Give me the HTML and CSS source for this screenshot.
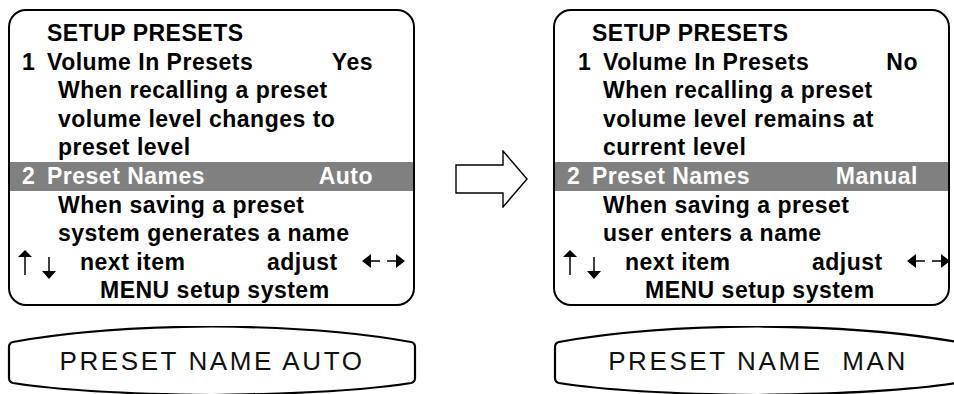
FILE: index.html
```html
<!doctype html>
<html lang="en">
<head>
  <meta charset="utf-8">
  <title>Setup presets</title>
  <link rel="stylesheet" href="styles.css">
</head>
<body>
<div class="page">
  <div class="screens">
    <section class="menu">
      <div class="title">SETUP PRESETS</div>
      <div class="item"><span class="num">1</span><span>Volume In Presets</span><span class="val">Yes</span></div>
      <div class="desc">When recalling a preset</div>
      <div class="desc">volume level changes to</div>
      <div class="desc">preset level</div>
      <div class="item sel"><span class="num">2</span><span>Preset Names</span><span class="val">Auto</span></div>
      <div class="desc">When saving a preset</div>
      <div class="desc">system generates a name</div>
      <div class="foot">
        <svg class="updown" width="70" height="30" viewBox="0 0 70 30">
          <line x1="15" y1="6" x2="15" y2="26" stroke="#000" stroke-width="1.5"/>
          <polygon points="15,1 8,8 22,8" fill="#000"/>
          <line x1="39" y1="8" x2="39" y2="23" stroke="#000" stroke-width="1.5"/>
          <polygon points="39,30 32,22 46,22" fill="#000"/>
        </svg>
        <span>next item</span>
        <span>adjust</span>
        <svg class="leftright" width="44" height="28" viewBox="0 0 44 28">
          <polygon points="0,13 9,6 9,20" fill="#000"/>
          <line x1="8" y1="13" x2="18" y2="13" stroke="#000" stroke-width="1.5"/>
          <line x1="25" y1="13" x2="35" y2="13" stroke="#000" stroke-width="1.5"/>
          <polygon points="43,13 34,6 34,20" fill="#000"/>
        </svg>
      </div>
      <div class="hint">MENU setup system</div>
    </section>

    <div class="gap">
      <svg width="74" height="58" viewBox="0 0 74 58">
        <path d="M1,15 L48,15 L48,1 L72,29 L48,57 L48,43 L1,43 Z" fill="#fff" stroke="#000" stroke-width="1.4" stroke-linejoin="miter"/>
      </svg>
    </div>

    <section class="menu menu-narrow">
      <div class="title">SETUP PRESETS</div>
      <div class="item item-shift"><span class="num">1</span><span>Volume In Presets</span><span class="val">No</span></div>
      <div class="desc">When recalling a preset</div>
      <div class="desc">volume level remains at</div>
      <div class="desc">current level</div>
      <div class="item sel"><span class="num">2</span><span>Preset Names</span><span class="val">Manual</span></div>
      <div class="desc">When saving a preset</div>
      <div class="desc">user enters a name</div>
      <div class="foot">
        <svg class="updown" width="70" height="30" viewBox="0 0 70 30">
          <line x1="15" y1="6" x2="15" y2="26" stroke="#000" stroke-width="1.5"/>
          <polygon points="15,1 8,8 22,8" fill="#000"/>
          <line x1="39" y1="8" x2="39" y2="23" stroke="#000" stroke-width="1.5"/>
          <polygon points="39,30 32,22 46,22" fill="#000"/>
        </svg>
        <span>next item</span>
        <span>adjust</span>
        <svg class="leftright" width="44" height="28" viewBox="0 0 44 28">
          <polygon points="0,13 9,6 9,20" fill="#000"/>
          <line x1="8" y1="13" x2="18" y2="13" stroke="#000" stroke-width="1.5"/>
          <line x1="25" y1="13" x2="35" y2="13" stroke="#000" stroke-width="1.5"/>
          <polygon points="43,13 34,6 34,20" fill="#000"/>
        </svg>
      </div>
      <div class="hint">MENU setup system</div>
    </section>
  </div>

  <div class="displays">
    <div class="lcd">
      <svg class="lcd-frame" width="410" height="72" viewBox="0 0 410 72">
        <path d="M6,16 C50,8 120,1 205,0.5 C290,1 360,8 404,16 Q408,17 408,21 L408,52 Q408,56 404,57 C360,64 290,68 205,69 C120,68 50,64 6,57 Q2,56 2,52 L2,21 Q2,17 6,16 Z" fill="#fff" stroke="#000" stroke-width="2.2"/>
      </svg>
      <span class="lcd-text">PRESET NAME AUTO</span>
    </div>
    <div class="lcd lcd-right">
      <svg class="lcd-frame" width="410" height="72" viewBox="0 0 410 72">
        <path d="M6,16 C50,8 120,1 205,0.5 C290,1 360,8 404,16 Q408,17 408,21 L408,52 Q408,56 404,57 C360,64 290,68 205,69 C120,68 50,64 6,57 Q2,56 2,52 L2,21 Q2,17 6,16 Z" fill="#fff" stroke="#000" stroke-width="2.2"/>
      </svg>
      <span class="lcd-text">PRESET NAME  MAN</span>
    </div>
  </div>
</div>
</body>
</html>
```

FILE: styles.css
```css
/* Page frame */
body {
  margin: 0;
  background: white;
}
.page {
  width: 954px;
  height: 394px;
  overflow: hidden;
}

/* The two menu screens */
.screens {
  display: flex;
  padding-top: 9px;
}
.menu {
  box-sizing: border-box;
  width: 407px;
  height: 297px;
  margin-left: 8px;
  padding-top: 8px;
  border: 2px solid #000;
  border-radius: 18px;
  color: #000;
  font-family: "Liberation Sans", Arial, sans-serif;
  font-weight: bold;
  font-size: 23px;
  line-height: 28.6px;
  letter-spacing: 0.5px;
  white-space: nowrap;
}
.menu-narrow {
  width: 397px;
  margin-left: 0;
}
.title {
  padding-left: 37px;
}
.item {
  display: grid;
  grid-template-columns: 37px 1fr auto;
  padding-right: calc(100% - 363px);
}
.item .num {
  padding-left: 12px;
}
.item-shift {
  grid-template-columns: 48px 1fr auto;
}
.item-shift .num {
  padding-left: 23px;
}
.sel {
  background: #808080;
  color: #fff;
}
.desc {
  padding-left: 48px;
}
.foot {
  display: grid;
  grid-template-columns: 70px 187px 95px 44px;
  height: 28.6px;
}
.foot svg {
  display: block;
}
.updown {
  margin-top: 1px;
}
.hint {
  padding-left: 90px;
}

/* Arrow between screens */
.gap {
  width: 138px;
  padding-top: 141px;
  padding-left: 40px;
  box-sizing: border-box;
}
.gap svg {
  display: block;
}

/* Front panel displays */
.displays {
  display: flex;
  margin-top: 20px;
}
.lcd {
  position: relative;
  flex: none;
  width: 410px;
  height: 70px;
  margin-left: 7px;
  display: flex;
  align-items: center;
  justify-content: center;
}
.lcd-right {
  margin-left: 136px;
}
.lcd-frame {
  position: absolute;
  top: 0;
  left: 0;
}
.lcd-text {
  position: relative;
  font-family: "Liberation Sans", Arial, sans-serif;
  font-size: 26px;
  line-height: 1;
  letter-spacing: 2.6px;
  white-space: pre;
  color: #111;
}
```
